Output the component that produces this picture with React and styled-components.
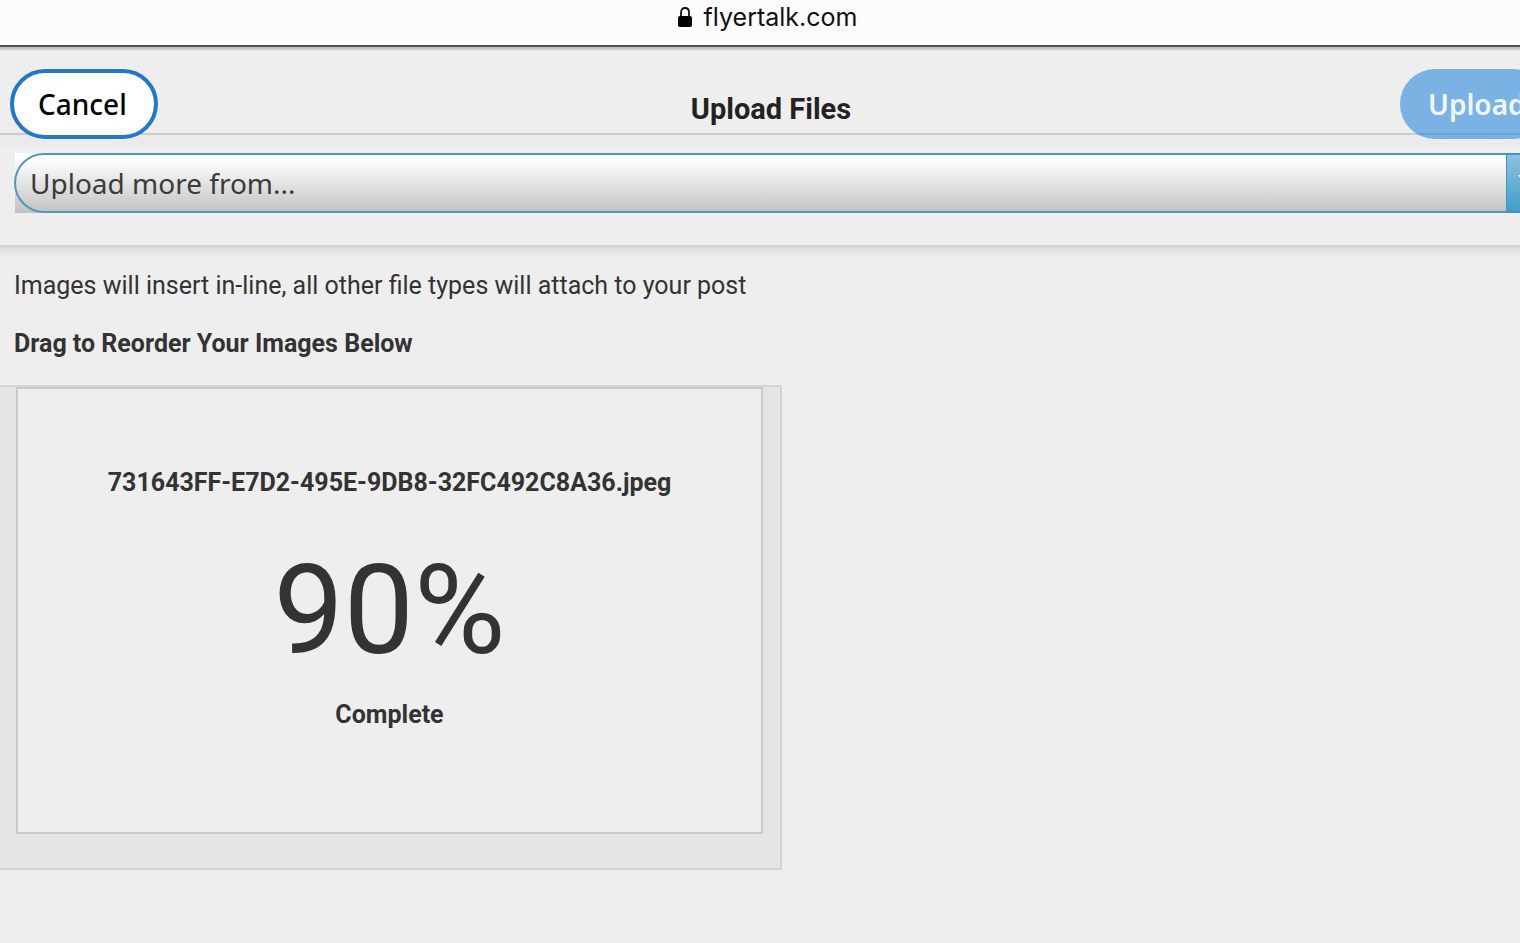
import React from 'react';
import styled, { createGlobalStyle } from 'styled-components';

const GlobalStyle = createGlobalStyle`
  * { box-sizing: border-box; }
  body {
    margin: 0;
    background: #eeeeee;
    color: #333333;
    font-family: Roboto, 'Liberation Sans', sans-serif;
    font-size: 25px;
    line-height: 30px;
  }
`;

const Page = styled.div`
  min-height: 100vh;
  overflow: hidden;
`;

const AddressBar = styled.div`
  display: flex;
  align-items: center;
  justify-content: center;
  gap: 12px;
  height: 47px;
  padding: 0 0 12px 15px;
  background: #fcfcfc;
  border-bottom: 2px solid #505050;
  color: #111111;
  font-family: Inter, sans-serif;
  font-size: 25px;
`;

const Lock = styled.svg`
  width: 14px;
  height: 20px;
`;

const Header = styled.header`
  display: flex;
  width: calc(100% + 28px);
  height: 88px;
  padding: 22px 0 0 10px;
  border-bottom: 2px solid #cbcbcb;
  background: linear-gradient(#c2c2c2, #c8c8c8 2px, #eeeeee 4px);
`;

const PillButton = styled.button`
  flex: none;
  width: 148px;
  height: 70px;
  padding: 0 0 0 24px;
  border: 4px solid ${(p) => (p.$primary ? 'transparent' : '#2277c6')};
  border-radius: 35px;
  background: ${(p) => (p.$primary ? 'rgba(27, 129, 218, 0.55)' : '#ffffff')};
  background-clip: ${(p) => (p.$primary ? 'border-box' : 'padding-box')};
  color: ${(p) => (p.$primary ? '#eef7ff' : '#000000')};
  font: ${(p) => (p.$primary ? 600 : 500)} 28px/32px 'Noto Sans', sans-serif;
  text-align: left;
  position: relative;
`;

const Title = styled.h1`
  flex: 1;
  margin: 0;
  padding: 24px 16px 0 0;
  color: #222222;
  font-size: 29px;
  line-height: 32px;
  text-align: center;
`;

const SourceBar = styled.div`
  width: calc(100% + 34px);
  height: 110px;
  padding: 18px 0 0 14px;
  background: linear-gradient(#ebebeb, #ebebeb 12px, #f2eeec 12px, #f2eeec 14px, #e9f0f4 14px, #e9f0f4 18px, #eeeeee 18px);
`;

const SelectFrame = styled.div`
  display: flex;
  height: 60px;
  background: linear-gradient(#ffffff, #fbfbfb 10px, #c2c2c2);
  background-clip: padding-box;
  border-left: 1px solid transparent;
  position: relative;
`;

const SourceSelect = styled.select`
  appearance: none;
  width: 100%;
  height: 60px;
  margin-left: -1px;
  padding: 0 60px 0 14px;
  border: 2px solid #4d9abd;
  border-radius: 30px 0 0 30px;
  background: transparent;
  color: #3b3b3b;
  font: 400 28px/32px 'Noto Sans', sans-serif;
`;

const SelectArrow = styled.span`
  position: absolute;
  top: 0;
  right: 0;
  display: grid;
  place-items: center;
  width: 48px;
  height: 60px;
  border: 2px solid #4495bb;
  border-left-width: 1px;
  background: linear-gradient(#8fc1df, #419dca);
  pointer-events: none;
`;

const Content = styled.main`
  padding-top: 26px;
  background: linear-gradient(#d0d0d0, #e2e2e2 5px, #eeeeee 12px);
`;

const Note = styled.p`
  margin: 0 14px 28px;
`;

const Subheading = styled.h2`
  margin: 0 14px 26px;
  font-size: 25px;
  line-height: 30px;
`;

const DropPanel = styled.section`
  width: 782px;
  max-width: 100%;
  padding: 0 17px 34px 16px;
  border: 2px solid #d4d4d4;
  border-left: 0;
  background: #e5e5e5;
`;

const FileCard = styled.article`
  display: flex;
  flex-direction: column;
  align-items: center;
  height: 447px;
  padding-top: 79px;
  border: 2px solid #cacaca;
  background: #eeeeee;
  font-weight: 700;
`;

const Percent = styled.div`
  margin: 43px 0 19px;
  font-size: 125px;
  font-weight: 400;
  line-height: 140px;
`;

export default function App() {
  return (
    <Page>
      <GlobalStyle />
      <AddressBar>
        <Lock viewBox="0 0 14 20" aria-hidden="true">
          <path d="M3 10V5.500C3 2.700 4.600 1 7 1s4 1.700 4 4.500V10" fill="none" stroke="#111" strokeWidth="1.800" />
          <rect x="0" y="9" width="14" height="11" rx="2" fill="#000" />
        </Lock>
        <span>flyertalk.com</span>
      </AddressBar>
      <Header>
        <PillButton type="button">Cancel</PillButton>
        <Title>Upload Files</Title>
        <PillButton type="button" $primary>Upload</PillButton>
      </Header>
      <SourceBar>
        <SelectFrame>
          <SourceSelect aria-label="Upload source" defaultValue="more">
            <option value="more">Upload more from...</option>
          </SourceSelect>
          <SelectArrow aria-hidden="true">
            <svg width="24" height="16" viewBox="0 0 24 16">
              <path d="M0 0H24L12 15Z" fill="#fff" />
            </svg>
          </SelectArrow>
        </SelectFrame>
      </SourceBar>
      <Content>
        <Note>Images will insert in-line, all other file types will attach to your post</Note>
        <Subheading>Drag to Reorder Your Images Below</Subheading>
        <DropPanel>
          <FileCard>
            <span>731643FF-E7D2-495E-9DB8-32FC492C8A36.jpeg</span>
            <Percent>90%</Percent>
            <span>Complete</span>
          </FileCard>
        </DropPanel>
      </Content>
    </Page>
  );
}
